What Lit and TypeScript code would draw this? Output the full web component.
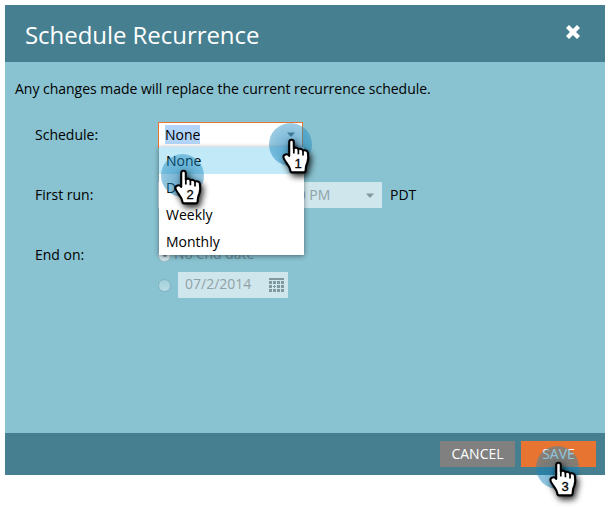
import { LitElement, html, css, svg } from "lit";
import { customElement, property } from "lit/decorators.js";

@customElement("step-pointer")
class StepPointer extends LitElement {
  @property() step = "1";
  static styles = css`
    :host { display: grid; width: 60px; height: 64px; pointer-events: none; }
    .halo, svg { grid-area: 1 / 1; }
    .halo {
      width: 43px; height: 43px; margin: 2.5px 0 0 4px; border-radius: 50%;
      background: radial-gradient(circle at 50% 58%, rgba(21, 120, 175, 0.62) 0, rgba(21, 130, 185, 0.5) 45%, rgba(30, 140, 195, 0.42) 80%);
    }
    svg { display: block; position: relative; overflow: visible; }
    .hand { filter: drop-shadow(2px 3px 3px rgba(0, 0, 0, 0.85)); }
    text { font-family: "Liberation Sans", Arial, sans-serif; font-size: 13px; stroke: #000; stroke-width: 0.3px; }
  `;
  render() {
    return html`<div class="halo"></div>
    <svg width="60" height="64" viewBox="0 0 60 64">
      <g class="hand">
        <path
          d="M24.2 35.8V22.2c0-3.2 4.6-3.2 4.6 0v6.2c1.3-1.3 4.1-.8 4.5.9 1.6-1 4.2-.3 4.6 1.3 2-.9 4.7 0 5 2.2.6 3.6.6 7-.6 10-.9 2.2-1.5 3.2-1.5 5.6 0 2.7-.5 4-1.9 4H27c-1.3 0-1.7-1-1.8-2.5-.2-2.7-2.1-4.3-3.7-7-1.2-2-3.1-4-3.1-5.9 0-2.7 3.8-3.8 5.8-1.2z"
          fill="#fff" stroke="#000" stroke-width="2.1" stroke-linejoin="round"
        />
        <path d="M28.8 28.4v5.1M33.4 29.5v4.8M38 31v4.4" fill="none" stroke="#000" stroke-width="1.7" />
      </g>
      ${svg`<text x="33" y="48" text-anchor="middle">${this.step}</text>`}
    </svg>`;
  }
}

@customElement("app-root")
class AppRoot extends LitElement {
  static styles = css`
    :host {
      display: block; position: relative; width: 610px; height: 508px; overflow: hidden;
      background: #fff; color: #000; font: 14px/20px "Open Sans", "Noto Sans", sans-serif;
    }
    * { box-sizing: border-box; }
    .frame { padding: 5px; }
    .dialog { width: 600px; height: 470px; display: flex; flex-direction: column; background: #89c2d0; }
    header {
      height: 57px; flex: none; background: #467f8f; color: #fff; display: flex;
      justify-content: space-between; padding: 0 25px 0 20px;
    }
    h1 { margin: 0; font-size: 24px; line-height: 60px; font-weight: 400; letter-spacing: -0.05px; }
    .close { margin-top: 20px; }
    main { flex: 1; padding: 17px 10px; }
    p { margin: 0 0 23px; height: 20px; white-space: nowrap; letter-spacing: -0.02px; }
    .row { display: flex; height: 60px; padding-left: 20px; }
    .label { width: 123px; line-height: 26px; }
    .combo { position: relative; width: 145px; height: 26px; }
    .input {
      width: 145px; height: 26px; border: 1px solid #e77431; background: #fff;
      display: flex; align-items: center; justify-content: space-between; padding: 0 7px 1px 6px;
    }
    .selected { background: #b2d4fb; line-height: 19px; }
    .menu {
      position: absolute; left: 1px; top: 25px; width: 145px; margin: 0; padding: 0;
      list-style: none; background: #fff; box-shadow: 0 1px 5px rgba(0, 0, 0, 0.45);
    }
    .menu li { height: 27px; line-height: 27px; padding-left: 7px; }
    .menu .active { background: #c1e9f7; }
    .field {
      height: 26px; background: #cfe6ec; color: #8fa2a8; display: flex; align-items: center;
      justify-content: space-between; padding: 0 7px;
    }
    .date { width: 110px; padding: 0 4px 0 7px; }
    .date span { padding-bottom: 2px; }
    .stamp { width: 112px; }
    .time { width: 112px; padding: 0 8px 0 0; }
    .time span { white-space: nowrap; }
    .zone { margin-left: 8px; line-height: 26px; }
    .end { display: flex; flex-direction: column; gap: 4px; }
    .option { display: flex; align-items: center; height: 26px; color: #648790; }
    .never { padding-bottom: 2px; }
    .radio {
      width: 13px; height: 13px; border-radius: 50%; background: linear-gradient(#a2cfda, #b9dde5);
      border: 1px solid #84b3bf; margin-right: 3px; display: grid; place-items: center; flex: none;
    }
    .radio.on { background: #d3e5ea; border-color: #9dbdc6; }
    .radio.on::after { content: ""; width: 4px; height: 4px; border-radius: 50%; background: #708e98; }
    .option .date { margin-left: 4px; }
    footer {
      height: 42px; flex: none; background: #467f8f; display: flex; justify-content: flex-end;
      gap: 6px; padding: 8px 9px;
    }
    button {
      width: 75px; height: 26px; border: 0; padding: 0; background: #808080; color: #fff;
      font: inherit; line-height: 26px;
    }
    .save { background: #e77431; }
    step-pointer { position: absolute; }
    .p1 { left: 265px; top: 120px; }
    .p2 { left: 157px; top: 151px; }
    .p3 { left: 532px; top: 443px; }
  `;

  private arrow(color: string) {
    return html`<svg width="8" height="5" viewBox="0 0 8 5"><path d="M0 .5h8L4.8 4.2q-.8.7-1.6 0z" fill=${color} /></svg>`;
  }

  private calendar() {
    const cells = [0, 1, 2].flatMap((r) => [0, 1, 2, 3].map((c) => [c * 4, 4 + r * 4]));
    return html`<svg width="15" height="14" viewBox="0 0 15 14">
      <path d="M0 0h15v2H0z" fill="#80989f" />
      ${cells.map(([x, y]) => svg`<rect x=${x} y=${y - 1} width="3" height="3" fill="#80989f" />`)}
      <path d="M4 7h1v1H4zM6 7h1v1H6zM4 9h1v1H4zM6 9h1v1H6z" fill="#cfe6ec" />
    </svg>`;
  }

  render() {
    return html`
      <div class="frame"><div class="dialog">
        <header>
          <h1>Schedule Recurrence</h1>
          <svg class="close" width="14" height="14" viewBox="0 0 14 14">
            <path d="M3 3l8 8M11 3l-8 8" stroke="#fff" stroke-width="4.3" stroke-linecap="square" />
          </svg>
        </header>
        <main>
          <p>Any changes made will replace the current recurrence schedule.</p>
          <div class="row">
            <span class="label">Schedule:</span>
            <div class="combo">
              <div class="input"><span class="selected">None</span>${this.arrow("#68747a")}</div>
              <ul class="menu">
                <li class="active">None</li><li>Daily</li><li>Weekly</li><li>Monthly</li>
              </ul>
            </div>
          </div>
          <div class="row">
            <span class="label">First run:</span>
            <div class="field stamp"></div>
            <div class="field time"><span>12:00 PM</span>${this.arrow("#809aa2")}</div>
            <span class="zone">PDT</span>
          </div>
          <div class="row">
            <span class="label">End on:</span>
            <div class="end">
              <div class="option"><i class="radio on"></i><span class="never">No end date</span></div>
              <div class="option"><i class="radio"></i><div class="field date"><span>07/2/2014</span>${this.calendar()}</div></div>
            </div>
          </div>
        </main>
        <footer><button>CANCEL</button><button class="save">SAVE</button></footer>
      </div></div>
      <step-pointer class="p1" step="1"></step-pointer>
      <step-pointer class="p2" step="2"></step-pointer>
      <step-pointer class="p3" step="3"></step-pointer>
    `;
  }
}
